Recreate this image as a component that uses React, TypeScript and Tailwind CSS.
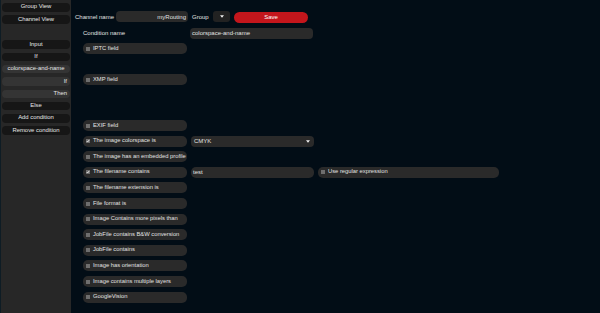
import React from 'react'

const font = { fontFamily: '"Liberation Sans", Arial, sans-serif' }

function SideButton({ label, light = false, align = 'center' }: { label: string; light?: boolean; align?: 'center' | 'right' }) {
  return (
    <div
      className={`h-[8.5px] shrink-0 rounded-[4px] flex items-center px-[3px] text-[5.9px] leading-none text-[#e6e6e6] ${
        light ? 'bg-[#343434]' : 'bg-[#161616]'
      } ${align === 'right' ? 'justify-end' : 'justify-center'}`}
    >
      {label}
    </div>
  )
}

function Box({ checked = false }: { checked?: boolean }) {
  return (
    <span className="w-[4px] h-[4px] bg-[#6e6e6e] flex items-center justify-center shrink-0">
      {checked && (
        <svg viewBox="0 0 8 8" className="w-[4px] h-[4px]">
          <path d="M1.5 4.2 L3.2 6 L6.6 1.8" fill="none" stroke="#fff" strokeWidth={1.6} />
        </svg>
      )}
    </span>
  )
}

function Caret() {
  return (
    <svg viewBox="0 0 6 4" className="w-[4px] h-[3px]">
      <path d="M0 0 L6 0 L3 4 Z" fill="#f0f0f0" />
    </svg>
  )
}

function CheckRow({ label, checked = false, children }: { label: string; checked?: boolean; children?: React.ReactNode }) {
  return (
    <div className="flex items-center h-[11px] shrink-0">
      <div className="w-[104px] h-[11px] rounded-[5px] bg-[#2a2a2a] flex items-center gap-[3px] pl-[3px] text-[5.8px] leading-none text-[#e2e2e2] whitespace-nowrap overflow-hidden">
        <Box checked={checked} />
        <span>{label}</span>
      </div>
      {children}
    </div>
  )
}

export default function App() {
  return (
    <div className="w-[600px] h-[313px] flex bg-[#020d16] overflow-hidden" style={font}>
      {/* Sidebar */}
      <div className="w-[71px] h-full bg-[#272727] border-l border-[#0e1c24] flex flex-col gap-[3.8px] pt-[3px] pl-[1px] pr-[1px]">
        <SideButton label="Group View" />
        <SideButton label="Channel View" />
        <div className="h-[9px] shrink-0" />
        <SideButton label="Input" />
        <SideButton label="If" />
        <SideButton label="colorspace-and-name" light />
        <SideButton label="If" light align="right" />
        <SideButton label="Then" light align="right" />
        <SideButton label="Else" />
        <SideButton label="Add condition" />
        <SideButton label="Remove condition" />
      </div>

      {/* Main */}
      <div className="flex-1 flex flex-col pl-[4px] pt-[11px] text-[#e2e2e2]">
        <div className="flex items-center h-[11px] text-[6px] leading-none">
          <span className="w-[41px]">Channel name</span>
          <div className="w-[72px] h-[11px] rounded-[4px] bg-[#2a2a2a] flex items-center justify-end pr-[2px]">myRouting</div>
          <span className="ml-[4px] w-[21px]">Group</span>
          <div className="w-[17px] h-[11px] rounded-[3px] bg-[#222222] flex items-center justify-center">
            <Caret />
          </div>
          <div className="ml-[4px] w-[74px] h-[11px] mt-[1px] rounded-[6px] bg-[#c3161c] flex items-center justify-center text-white">
            Save
          </div>
        </div>

        <div className="flex items-center h-[10.5px] mt-[6px] pl-[8px] text-[6px] leading-none">
          <span className="w-[107px]">Condition name</span>
          <div className="w-[123px] h-[10.5px] rounded-[4px] bg-[#2a2a2a] flex items-center pl-[2px]">colorspace-and-name</div>
        </div>

        <div className="flex flex-col gap-[4.6px] mt-[4.6px] pl-[8px]">
          <CheckRow label="IPTC field" />
          <div className="h-[10.8px] shrink-0" />
          <CheckRow label="XMP field" />
          <div className="h-[25.8px] shrink-0" />
          <CheckRow label="EXIF field" />
          <CheckRow label="The image colorspace is" checked>
            <div className="ml-[4px] w-[123px] h-[11px] rounded-[4px] bg-[#2a2a2a] flex items-center justify-between pl-[3px] pr-[4px] text-[6px] leading-none">
              <span>CMYK</span>
              <Caret />
            </div>
          </CheckRow>
          <CheckRow label="The image has an embedded profile" />
          <CheckRow label="The filename contains" checked>
            <div className="ml-[4px] w-[123px] h-[11px] rounded-[5px] bg-[#2a2a2a] flex items-center pl-[2px] text-[6px] leading-none">test</div>
            <div className="ml-[4px] w-[181px] h-[11px] rounded-[5px] bg-[#2a2a2a] flex items-center gap-[3px] pl-[3px] text-[5.8px] leading-none">
              <Box />
              <span>Use regular expression</span>
            </div>
          </CheckRow>
          <CheckRow label="The filename extension is" />
          <CheckRow label="File format is" />
          <CheckRow label="Image Contains more pixels than" />
          <CheckRow label="JobFile contains B&W conversion" />
          <CheckRow label="JobFile contains" />
          <CheckRow label="Image has orientation" />
          <CheckRow label="Image contains multiple layers" />
          <CheckRow label="GoogleVision" />
        </div>
      </div>
    </div>
  )
}
